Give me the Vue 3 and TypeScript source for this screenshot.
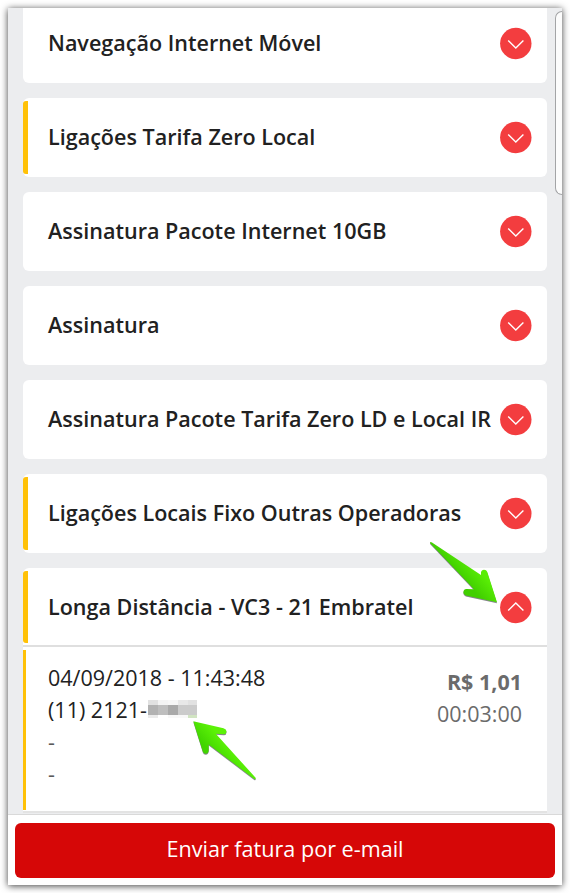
<script setup lang="ts">
interface Item {
  title: string
  marked?: boolean
}

const items: Item[] = [
  { title: 'Navegação Internet Móvel' },
  { title: 'Ligações Tarifa Zero Local', marked: true },
  { title: 'Assinatura Pacote Internet 10GB' },
  { title: 'Assinatura' },
  { title: 'Assinatura Pacote Tarifa Zero LD e Local IR' },
  { title: 'Ligações Locais Fixo Outras Operadoras', marked: true },
]
</script>

<template>
  <main class="page">
    <div class="screen">
      <div class="list">
        <section v-for="item in items" :key="item.title" class="card" :class="{ marked: item.marked }">
          <h2>{{ item.title }}</h2>
          <svg class="toggle" viewBox="0 0 32 32">
            <circle cx="15.8" cy="15.5" r="15.7" />
            <path d="M8.2 12.4 L15.8 20 L23.4 12.4" />
          </svg>
        </section>
        <section class="open">
          <header class="card marked head">
            <h2>Longa Distância - VC3 - 21 Embratel</h2>
            <svg class="toggle" viewBox="0 0 32 32">
              <circle cx="15.8" cy="15.5" r="15.7" />
              <path d="M8.2 18.6 L15.8 11 L23.4 18.6" />
            </svg>
          </header>
          <div class="detail">
            <div class="call">
              <span>04/09/2018 - 11:43:48</span>
              <span class="number">(11) 2121-<svg class="mosaic" viewBox="0 0 49 18" shape-rendering="crispEdges">
                <rect width="10" height="5" fill="#e1e1e1" /><rect x="10" width="10" height="5" fill="#f3f3f3" />
                <rect x="20" width="10" height="5" fill="#f6f6f6" /><rect x="30" width="10" height="5" fill="#e8e8e8" />
                <rect x="40" width="9" height="5" fill="#e1e1e1" />
                <rect y="5" width="10" height="10" fill="#b2b2b2" /><rect x="10" y="5" width="10" height="10" fill="#bebebe" />
                <rect x="20" y="5" width="10" height="10" fill="#a9a9a9" /><rect x="30" y="5" width="19" height="10" fill="#cbcbcb" />
                <rect y="15" width="10" height="3" fill="#ebebeb" /><rect x="20" y="15" width="20" height="3" fill="#f8f8f8" />
                <rect x="40" y="15" width="9" height="3" fill="#d1e4c2" />
              </svg></span>
              <span class="empty">-</span>
              <span class="empty">-</span>
            </div>
            <div class="cost">
              <strong>R$ 1,01</strong>
              <span>00:03:00</span>
            </div>
          </div>
        </section>
      </div>
      <footer class="footer">
        <button type="button">Enviar fatura por e-mail</button>
      </footer>
      <div class="scrollbar"></div>
    </div>

    <svg class="arrows" viewBox="0 0 570 893">
      <defs>
        <linearGradient id="down" gradientUnits="userSpaceOnUse" x1="472" y1="589" x2="485" y2="577">
          <stop offset="0" stop-color="#41cf00" />
          <stop offset="1" stop-color="#59ed05" />
        </linearGradient>
        <linearGradient id="up" gradientUnits="userSpaceOnUse" x1="204" y1="745" x2="217" y2="733">
          <stop offset="0" stop-color="#41d500" />
          <stop offset="1" stop-color="#5cf207" />
        </linearGradient>
      </defs>
      <path fill="url(#down)" d="M430 543 Q430 541.5 432 542.5 L481 575 L481 572.5 Q481.5 569.7 484 569.7 Q486.5 569.7 487.3 572 L497 602.3 L465.8 595.6 Q463.2 594.5 463.4 591.8 Q463.8 588.8 466.5 588.9 L474 589.3 Z" />
      <path fill="url(#up)" d="M193.3 721.2 L223.5 728.2 Q226.5 729 226.6 731.4 Q226.4 734 223.8 734.3 L215.8 733.8 L255.6 777.8 Q256 779.7 254.2 779 L208.7 744.4 L208.7 750.5 Q208.5 753.6 205.8 753.8 Q203.4 753.8 202.8 751.5 Z" />
    </svg>
  </main>
</template>

<style>
body {
  background: #fff;
}
</style>

<style scoped>
* {
  box-sizing: border-box;
}
.page {
  position: relative;
  height: 893px;
  padding: 8px;
  overflow: hidden;
  font-family: 'Open Sans', 'Noto Sans', sans-serif;
  color: #212121;
}
.screen {
  position: relative;
  width: 554px;
  height: 877px;
  display: flex;
  flex-direction: column;
  background: #ecedef;
  box-shadow: 0 1px 7px rgba(0, 0, 0, 0.75);
}
.list {
  flex: 1;
  min-height: 0;
  overflow: hidden;
  padding: 0 15px;
  display: flex;
  flex-direction: column;
  gap: 15px;
}
.card {
  flex: none;
  position: relative;
  height: 79px;
  padding: 0 15px 0 25px;
  display: flex;
  align-items: center;
  justify-content: space-between;
  background: #fff;
  border-radius: 6px;
}
.list > .card:first-child {
  height: 75px;
  padding-bottom: 4px;
  border-radius: 0 0 6px 6px;
}
.list > .card:first-child .toggle {
  margin-top: 1px;
}
.marked::before {
  content: '';
  position: absolute;
  left: 0;
  top: 3px;
  bottom: 3px;
  width: 5px;
  background: #ffc107;
  border-radius: 3px 0 0 3px;
}
h2 {
  margin: 0;
  padding-bottom: 1px;
  font-size: 21.55px;
  font-weight: 600;
  line-height: 30px;
  white-space: nowrap;
}
.toggle {
  flex: none;
  width: 32px;
  height: 32px;
  overflow: visible;
}
.toggle circle {
  fill: #f33d3f;
}
.toggle path {
  fill: none;
  stroke: #fff;
  stroke-width: 1.4;
}
.open {
  flex: none;
}
.head {
  padding-top: 2px;
  border-radius: 6px 6px 0 0;
  border-bottom: 2px solid #dfdfdf;
}
.head::before {
  bottom: 2px;
}
.detail {
  position: relative;
  height: 166px;
  padding: 14.5px 25px 0;
  display: flex;
  justify-content: space-between;
  background: #fff;
  border-bottom: 2px solid #e3e3e3;
  font-size: 21.5px;
  line-height: 32.3px;
}
.detail::before {
  content: '';
  position: absolute;
  left: 0;
  top: 3px;
  bottom: 1px;
  width: 3px;
  background: #ffc107;
}
.call,
.cost {
  display: flex;
  flex-direction: column;
}
.number {
  display: flex;
}
.mosaic {
  width: 49px;
  height: 18px;
  margin: 6.5px 0 0 1px;
}
.empty {
  color: #5a5a5a;
}
.cost {
  padding-top: 4.5px;
  align-items: flex-end;
  color: #6b6b6b;
}
.footer {
  flex: none;
  height: 71px;
  padding: 8px 7px 7px;
  background: #fff;
  border-top: 1px solid #d9d9d9;
}
button {
  display: block;
  width: 100%;
  height: 55px;
  padding: 0 0 4px;
  border: 0;
  border-radius: 6px;
  background: #d60707;
  color: #fff;
  font: 400 21.6px 'Open Sans', 'Noto Sans', sans-serif;
}
.scrollbar {
  position: absolute;
  right: 0;
  top: 3px;
  width: 7px;
  height: 184px;
  background: #fcfcfc;
  border: 1px solid #a3a4a6;
  border-right: 0;
  border-radius: 8px 0 0 8px;
}
.arrows {
  position: absolute;
  left: 0;
  top: 0;
  width: 570px;
  height: 893px;
  filter: drop-shadow(0 1px 0.5px rgba(50, 50, 60, 0.6));
}
</style>
